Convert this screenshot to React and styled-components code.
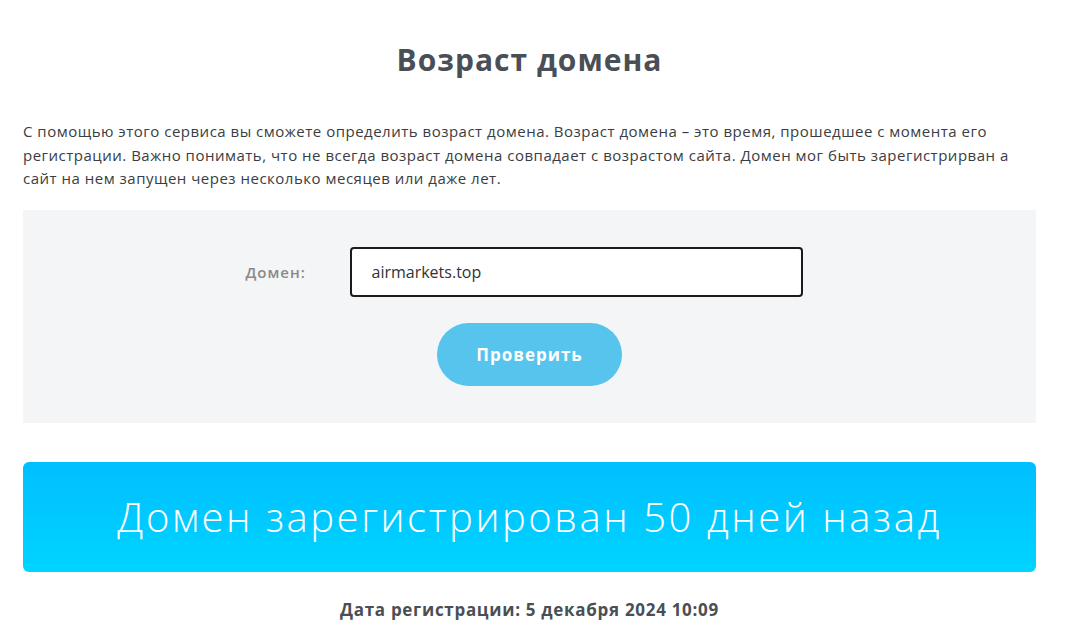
import React, { useState } from "react";
import styled, { createGlobalStyle } from "styled-components";

const GlobalStyle = createGlobalStyle`
  body {
    margin: 0;
    background: #fff;
    font-family: "Open Sans", "Noto Sans", sans-serif;
  }
  * { box-sizing: border-box; }
`;

const SPage = styled.div`
  width: 1013px;
  margin-left: 23px;
  display: flex;
  flex-direction: column;
`;

const STitle = styled.h1`
  margin: 40px 0 0;
  text-align: center;
  font-family: "Open Sans", sans-serif;
  font-size: 30px;
  font-weight: 700;
  line-height: 40px;
  letter-spacing: 1px;
  color: #4a4f55;
`;

const SText = styled.p`
  margin: 40px 0 0;
  font-family: "Open Sans", sans-serif;
  font-size: 15px;
  line-height: 23.5px;
  letter-spacing: 0.5px;
  color: #3a3d42;
`;

const SForm = styled.form`
  margin-top: 19px;
  height: 213px;
  background: #f3f5f6;
  display: flex;
  flex-direction: column;
  align-items: center;
  padding-top: 37px;
  gap: 26px;
`;

const SRow = styled.div`
  display: flex;
  align-items: center;
  margin-left: -11px;
`;

const SLabel = styled.label`
  width: 104px;
  font-family: "Open Sans", sans-serif;
  font-size: 15px;
  font-weight: 600;
  letter-spacing: 1px;
  color: #8a8a8a;
`;

const SInput = styled.input`
  width: 453px;
  height: 50px;
  border: 2px solid #1b1b1b;
  border-radius: 4px;
  padding: 0 20px;
  font-family: "Open Sans", sans-serif;
  font-size: 16px;
  color: #333;
  background: #fff;
  outline: none;
`;

const SButton = styled.button`
  width: 185px;
  height: 63px;
  border: none;
  border-radius: 32px;
  background: #56c4ec;
  color: #fff;
  font-family: "Open Sans", sans-serif;
  font-size: 17px;
  font-weight: 700;
  letter-spacing: 1px;
  cursor: pointer;
`;

const SResult = styled.div`
  margin-top: 39px;
  height: 110px;
  border-radius: 6px;
  background: linear-gradient(180deg, #00bfff 0%, #00d4ff 100%);
  display: flex;
  align-items: center;
  justify-content: center;
  color: #fff;
  font-family: "Open Sans", sans-serif;
  font-size: 40px;
  font-weight: 300;
  letter-spacing: 2.55px;
`;

const SDate = styled.div`
  margin-top: 26px;
  text-align: center;
  font-family: "Open Sans", sans-serif;
  font-size: 17px;
  font-weight: 700;
  letter-spacing: 0.7px;
  color: #4a4f55;
`;

const App = () => {
  const [domain, setDomain] = useState("airmarkets.top");

  return (
    <>
      <GlobalStyle />
      <SPage>
        <STitle>Возраст домена</STitle>
        <SText>
          С помощью этого сервиса вы сможете определить возраст домена. Возраст
          домена – это время, прошедшее с момента его регистрации. Важно
          понимать, что не всегда возраст домена совпадает с возрастом сайта.
          Домен мог быть зарегистрирван а сайт на нем запущен через несколько
          месяцев или даже лет.
        </SText>
        <SForm onSubmit={(e) => e.preventDefault()}>
          <SRow>
            <SLabel htmlFor="domain">Домен:</SLabel>
            <SInput
              id="domain"
              type="text"
              value={domain}
              onChange={(e) => setDomain(e.target.value)}
            />
          </SRow>
          <SButton type="submit">Проверить</SButton>
        </SForm>
        <SResult>Домен зарегистрирован 50 дней назад</SResult>
        <SDate>Дата регистрации: 5 декабря 2024 10:09</SDate>
      </SPage>
    </>
  );
};

export default App;
